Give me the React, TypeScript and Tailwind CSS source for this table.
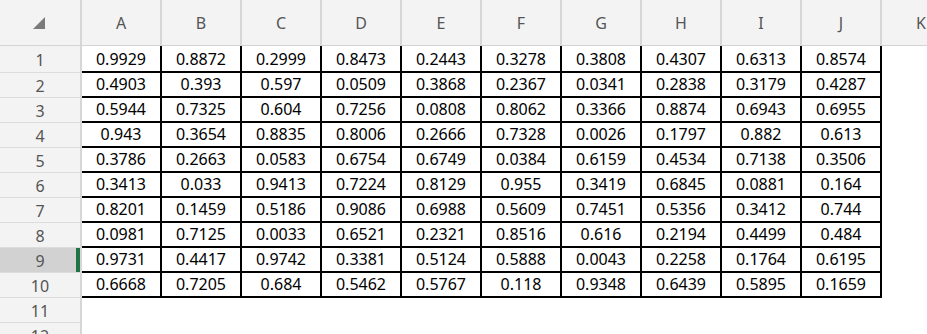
import React from "react";

const COLS = ["A", "B", "C", "D", "E", "F", "G", "H", "I", "J"];

const DATA: string[][] = [
  ["0.9929", "0.8872", "0.2999", "0.8473", "0.2443", "0.3278", "0.3808", "0.4307", "0.6313", "0.8574"],
  ["0.4903", "0.393", "0.597", "0.0509", "0.3868", "0.2367", "0.0341", "0.2838", "0.3179", "0.4287"],
  ["0.5944", "0.7325", "0.604", "0.7256", "0.0808", "0.8062", "0.3366", "0.8874", "0.6943", "0.6955"],
  ["0.943", "0.3654", "0.8835", "0.8006", "0.2666", "0.7328", "0.0026", "0.1797", "0.882", "0.613"],
  ["0.3786", "0.2663", "0.0583", "0.6754", "0.6749", "0.0384", "0.6159", "0.4534", "0.7138", "0.3506"],
  ["0.3413", "0.033", "0.9413", "0.7224", "0.8129", "0.955", "0.3419", "0.6845", "0.0881", "0.164"],
  ["0.8201", "0.1459", "0.5186", "0.9086", "0.6988", "0.5609", "0.7451", "0.5356", "0.3412", "0.744"],
  ["0.0981", "0.7125", "0.0033", "0.6521", "0.2321", "0.8516", "0.616", "0.2194", "0.4499", "0.484"],
  ["0.9731", "0.4417", "0.9742", "0.3381", "0.5124", "0.5888", "0.0043", "0.2258", "0.1764", "0.6195"],
  ["0.6668", "0.7205", "0.684", "0.5462", "0.5767", "0.118", "0.9348", "0.6439", "0.5895", "0.1659"],
];

function RowHeader({ n, selected, h }: { n: number; selected?: boolean; h: string }) {
  return (
    <div
      className={`relative shrink-0 w-[82px] ${h} border-r-2 border-r-[#d6d6d6] border-b border-b-[#dcdcdc] flex items-center justify-center pt-[2px] text-[16px] text-[#555555] ${
        selected ? "bg-[#d2d2d2]" : "bg-[#f3f3f3]"
      }`}
    >
      {n}
      {selected && <div className="absolute right-0 top-0 bottom-0 w-[4px] bg-[#217346]" />}
    </div>
  );
}

export default function App() {
  return (
    <div
      className="w-[927px] h-[334px] overflow-hidden bg-white"
      style={{ fontFamily: '"Noto Sans", "Open Sans", sans-serif' }}
    >
      {/* Column header */}
      <div className="flex h-[46px] border-b border-b-[#d4d4d4] bg-[#f3f3f3]">
        <div className="shrink-0 w-[82px] border-r-2 border-r-[#d6d6d6] flex items-center justify-end pr-[34px]">
          <svg width="13" height="13" viewBox="0 0 13 13" className="mt-[2px]">
            <polygon points="12,0 12,12 0,12" fill="#7a7a7a" />
          </svg>
        </div>
        {[...COLS, "K"].map((c) => (
          <div
            key={c}
            className="shrink-0 w-[80px] border-r-2 border-r-[#d6d6d6] flex items-center justify-center text-[16px] text-[#555555]"
          >
            {c}
          </div>
        ))}
      </div>

      {/* Data rows */}
      {DATA.map((row, r) => {
        const h = r === 0 ? "h-[27px]" : "h-[25px]";
        return (
          <div key={r} className="flex">
            <RowHeader n={r + 1} selected={r === 8} h={h} />
            {row.map((v, c) => (
              <div
                key={c}
                className={`shrink-0 w-[80px] ${h} border-r-2 border-b-2 border-black flex items-end justify-center pb-[1px] leading-[22px] text-[16px] text-black`}
              >
                {v}
              </div>
            ))}
          </div>
        );
      })}

      {/* Empty rows */}
      {[11, 12].map((n) => (
        <div key={n} className="flex">
          <RowHeader n={n} h="h-[25px]" />
        </div>
      ))}
    </div>
  );
}
